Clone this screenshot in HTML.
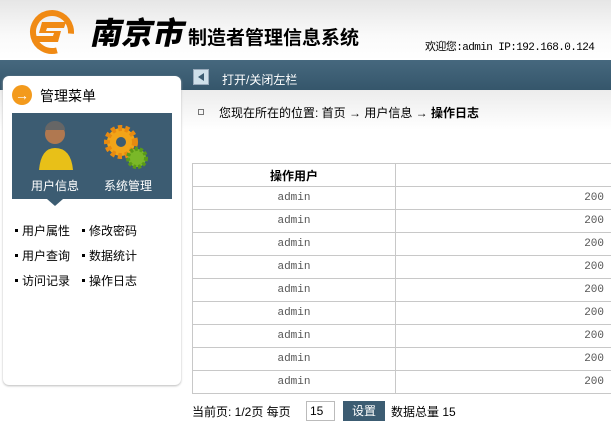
<!DOCTYPE html>
<html><head><meta charset="utf-8"><style>
*{margin:0;padding:0;box-sizing:border-box}
body{width:611px;height:447px;overflow:hidden;background:#fff;font-family:"Liberation Sans","Noto Sans CJK SC",sans-serif;font-size:12px;color:#000;position:relative}
.hdr{position:absolute;left:0;top:0;width:611px;height:60px;background:linear-gradient(#e6e6e6,#fafafa 60%,#fff)}
.bar{position:absolute;left:0;top:60px;width:611px;height:30px;background:linear-gradient(#46687e,#35566b)}
.main{position:absolute;left:0;top:90px;width:611px;height:357px;background:linear-gradient(#ececec,#fff 40px)}
.abs{position:absolute;white-space:nowrap}
.panel{position:absolute;left:3px;top:76px;width:178px;height:309px;background:#fff;border-radius:6px;box-shadow:0 1px 2px #bbb}
.dk{position:absolute;left:12px;top:113px;width:160px;height:86px;background:#3c5c72}
.tri{position:absolute;left:47px;top:199px;border-left:8px solid transparent;border-right:8px solid transparent;border-top:7px solid #3c5c72}
.lk{position:absolute;font-size:12px}
.lk:before{content:"";display:inline-block;width:3px;height:3px;background:#000;margin:0 4px 2px 0;vertical-align:middle}
table{position:absolute;left:192px;top:163px;width:430px;border-collapse:collapse}
td{border:1px solid #c8c8c8;height:23px;font-family:"Liberation Mono",monospace;font-size:11px;color:#555}
</style></head><body>
<div class="hdr"></div>
<svg class="abs" style="left:28px;top:5px" width="46" height="52" viewBox="0 0 46 52">
<circle cx="24" cy="27" r="19" fill="none" stroke="#f08a14" stroke-width="6" stroke-dasharray="96 24" transform="rotate(75 24 27)"/>
<path d="M14 17 h24 l-2 6 h-17 l-1 3 h15 l-3 11 h-24 l2 -6 h17 l1 -3 h-15 z" fill="#f08a14"/>
</svg>
<div class="abs" style="left:88px;top:16px;font-size:31px;font-weight:900;line-height:36px;transform:skewX(-12deg);transform-origin:0 100%">南京市</div>
<div class="abs" style="left:188px;top:27px;font-size:19px;font-weight:bold;line-height:24px">制造者管理信息系统</div>
<div class="abs" style="left:425px;top:38px;font-size:11px;font-family:'Liberation Mono','Noto Sans CJK SC',monospace;letter-spacing:-0.6px">欢迎您:admin IP:192.168.0.124</div>
<div class="bar"></div>
<div class="main"></div>
<div class="abs" style="left:193px;top:69px;width:16px;height:16px;background:#cfe0ea;border:1px solid #9ab"><div style="position:absolute;left:4px;top:3px;border-right:6px solid #3c5c72;border-top:4px solid transparent;border-bottom:4px solid transparent"></div></div>
<div class="abs" style="left:222px;top:71px;color:#fff;font-size:12px">打开/关闭左栏</div>
<div class="panel"></div>
<div class="abs" style="left:12px;top:85px;width:20px;height:20px;border-radius:50%;background:#f39a1c;color:#fff;font-weight:bold;text-align:center;line-height:20px;font-size:14px">→</div>
<div class="abs" style="left:40px;top:86px;font-size:14px">管理菜单</div>
<div class="dk"></div><div class="tri"></div>
<svg class="abs" style="left:37px;top:120px" width="40" height="52"><circle cx="18" cy="14" r="10" fill="#b07850"/><path d="M8 10 a10 9 0 0 1 20 0 z" fill="#666"/><path d="M2 50 q2-22 16-22 q16 0 18 22 z" fill="#e8c018"/></svg>
<svg class="abs" style="left:103px;top:122px" width="48" height="50"><circle cx="18" cy="20" r="14" fill="#f2a418" stroke="#e88a10" stroke-width="6" stroke-dasharray="4 3"/><circle cx="18" cy="20" r="5" fill="#3c5c72"/><circle cx="34" cy="36" r="9" fill="#7ab828" stroke="#5a9a18" stroke-width="4" stroke-dasharray="3 2"/></svg>
<div class="abs" style="left:31px;top:177px;color:#fff;font-size:12px">用户信息</div>
<div class="abs" style="left:104px;top:177px;color:#fff;font-size:12px">系统管理</div>
<div class="lk" style="left:15px;top:222px">用户属性</div><div class="lk" style="left:82px;top:222px">修改密码</div>
<div class="lk" style="left:15px;top:247px">用户查询</div><div class="lk" style="left:82px;top:247px">数据统计</div>
<div class="lk" style="left:15px;top:272px">访问记录</div><div class="lk" style="left:82px;top:272px">操作日志</div>
<div class="abs" style="left:198px;top:109px;width:6px;height:6px;border:1px solid #777"></div>
<div class="abs" style="left:219px;top:104px;font-size:12px">您现在所在的位置: 首页 → 用户信息 → <b>操作日志</b></div>
<table>
<tr><td style="width:203px;text-align:center;font-family:'Liberation Sans','Noto Sans CJK SC',sans-serif;font-weight:bold;color:#000;font-size:12px">操作用户</td><td></td></tr>
<tr><td align="center">admin</td><td align="right" style="padding-right:17px">200</td></tr>
<tr><td align="center">admin</td><td align="right" style="padding-right:17px">200</td></tr>
<tr><td align="center">admin</td><td align="right" style="padding-right:17px">200</td></tr>
<tr><td align="center">admin</td><td align="right" style="padding-right:17px">200</td></tr>
<tr><td align="center">admin</td><td align="right" style="padding-right:17px">200</td></tr>
<tr><td align="center">admin</td><td align="right" style="padding-right:17px">200</td></tr>
<tr><td align="center">admin</td><td align="right" style="padding-right:17px">200</td></tr>
<tr><td align="center">admin</td><td align="right" style="padding-right:17px">200</td></tr>
<tr><td align="center">admin</td><td align="right" style="padding-right:17px">200</td></tr>
</table>
<div class="abs" style="left:192px;top:403px;font-size:12px">当前页: 1/2页 每页</div>
<div class="abs" style="left:306px;top:401px;width:29px;height:20px;border:1px solid #bbb;background:#fff;font-size:12px;padding:2px 3px">15</div>
<div class="abs" style="left:343px;top:401px;width:42px;height:20px;background:#3c5c72;color:#fff;text-align:center;line-height:20px;font-size:12px">设置</div>
<div class="abs" style="left:391px;top:403px;font-size:12px">数据总量 15</div>
</body></html>
